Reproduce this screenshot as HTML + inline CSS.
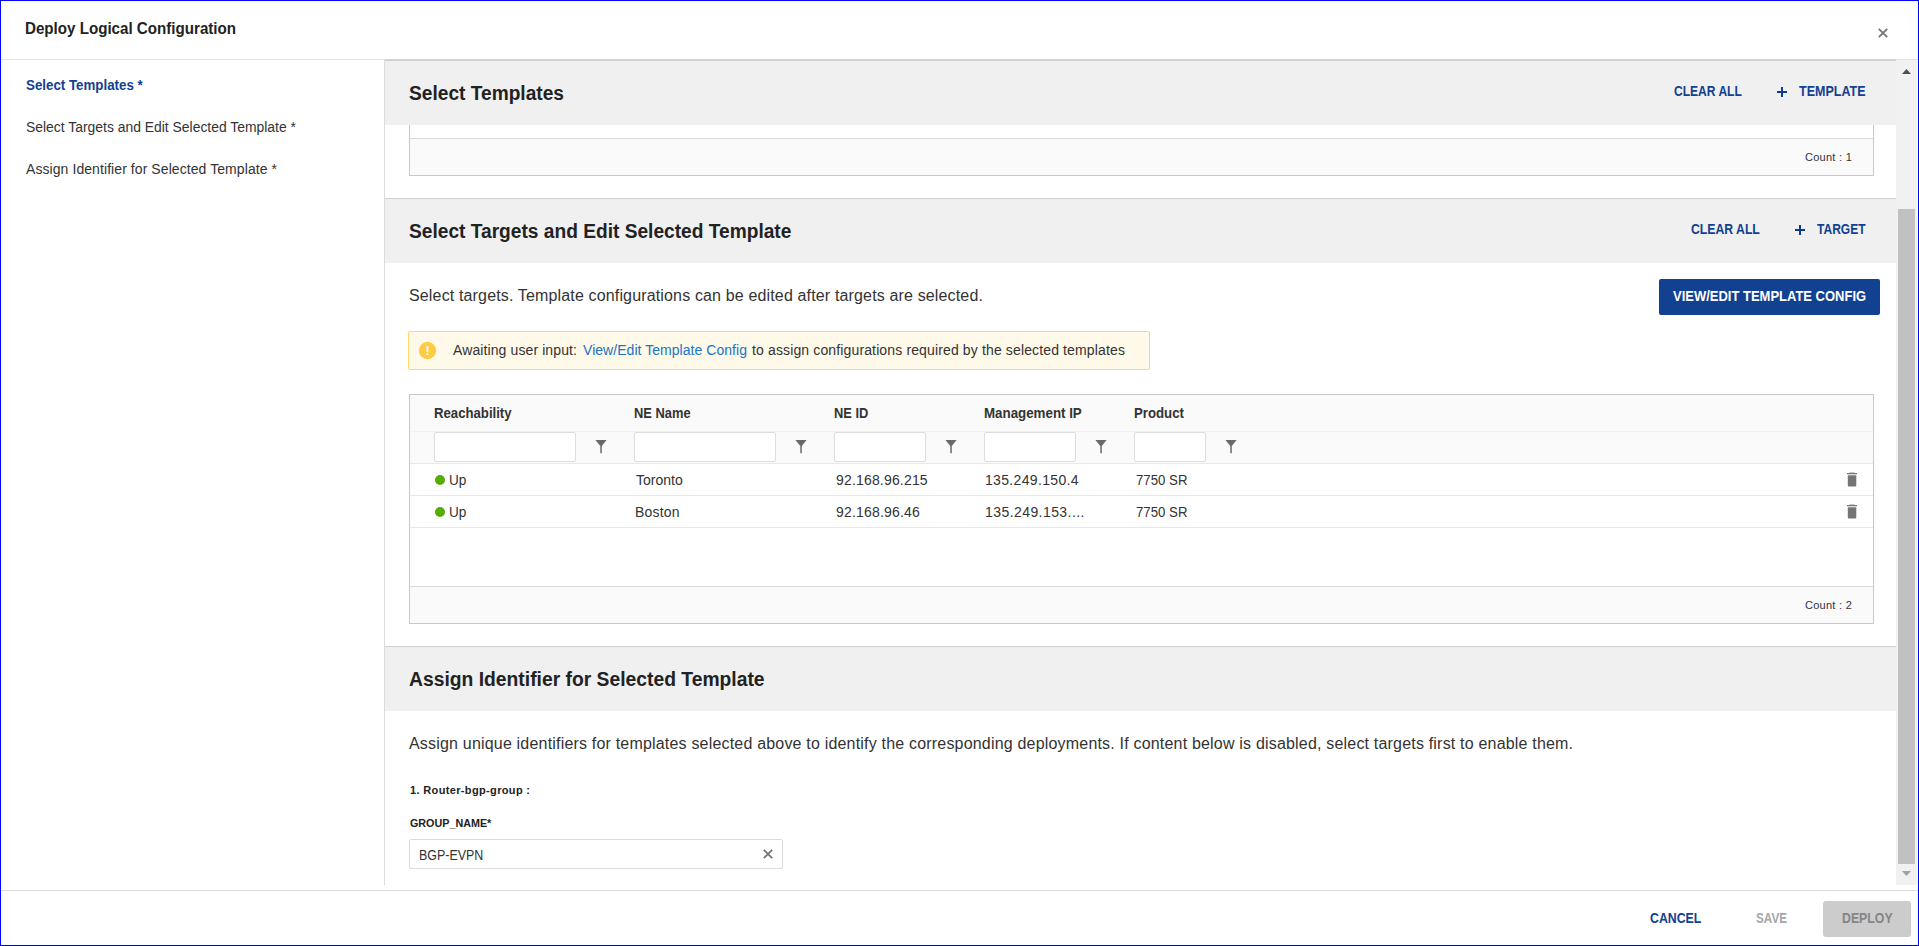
<!DOCTYPE html>
<html><head><meta charset="utf-8"><title>Deploy Logical Configuration</title>
<style>
*{box-sizing:border-box;margin:0;padding:0}
html,body{width:1919px;height:946px;overflow:hidden;background:#fff}
body{font-family:"Liberation Sans",sans-serif;color:#333;position:relative;font-size:14px}
.abs{position:absolute}
#frame{position:absolute;left:0;top:0;width:1919px;height:946px;border:1px solid #0000ff;z-index:50;pointer-events:none}
.t{position:absolute;white-space:nowrap;line-height:1;transform-origin:0 50%}
#hdrline{left:1px;top:59px;width:1917px;height:1px;background:#e2e2e2}
#hdrline2{left:385px;top:59px;width:1511px;height:2px;background:#d2d2d2}
#sideline{left:384px;top:60px;width:1px;height:825px;background:#dcdcdc}
.band{left:385px;width:1511px;height:64px;background:#f0f0f0}
.sep{left:385px;width:1511px;height:1px;background:#d0d0d0}
.tbl{left:409px;width:1465px;border:1px solid #c8c8c8;background:#fff}
.row{position:absolute;left:0;width:1463px}
.fin{position:absolute;height:30px;top:432px;border:1px solid #dedede;border-radius:2px;background:#fff}
.dot{position:absolute;width:10.6px;height:10.6px;border-radius:50%;background:#58ab00}
</style></head><body>
<div id="frame"></div>
<svg class="abs" style="left:1878px;top:28px" width="10" height="10" viewBox="0 0 10 10"><path d="M0.8 0.8L9.2 9.2M9.2 0.8L0.8 9.2" stroke="#757575" stroke-width="1.8" fill="none"/></svg>
<div id="hdrline" class="abs"></div>
<div id="hdrline2" class="abs"></div>
<div id="sideline" class="abs"></div>


<!-- section 1 -->
<div class="abs band" style="top:61px"></div>
<div class="abs" style="left:409px;top:125px;width:1465px;height:51px;border:1px solid #c8c8c8;border-top:none;background:#fff">
  <div class="abs" style="left:0;top:13px;width:1463px;height:37px;background:#fafafa;border-top:1px solid #d8d8d8"></div>
</div>

<svg class="abs" style="left:1777px;top:87px" width="10" height="10" viewBox="0 0 10 10"><path d="M4 0H6V4H10V6H6V10H4V6H0V4H4Z" fill="#0f3b8e"/></svg>
<!-- section 2 -->
<div class="abs sep" style="top:198px"></div>
<div class="abs band" style="top:199px"></div>
<svg class="abs" style="left:1795px;top:225px" width="10" height="10" viewBox="0 0 10 10"><path d="M4 0H6V4H10V6H6V10H4V6H0V4H4Z" fill="#0f3b8e"/></svg>
<div class="abs" style="left:1659px;top:279px;width:221px;height:36px;background:#124191;border-radius:2px"></div>

<div class="abs" style="left:408px;top:331px;width:742px;height:39px;background:#fef9e9;border:1px solid #fdd772;border-radius:2px"></div>
<svg class="abs" style="left:418px;top:341px" width="19" height="19" viewBox="0 0 19 19"><circle cx="9.5" cy="9.5" r="8.65" fill="#fecb45"/><text x="9.5" y="14" text-anchor="middle" font-family="Liberation Sans, sans-serif" font-size="12.5" font-weight="bold" fill="#fffdf5">!</text></svg>

<div class="abs tbl" style="top:394px;height:230px">
  <div class="row" style="top:0;height:37px;background:#fafafa;border-bottom:1px solid #f2f2f2"></div>
  <div class="row" style="top:37px;height:32px;background:#fafafa;border-bottom:1px solid #e9e9e9"></div>
  <div class="row" style="top:69px;height:32px;border-bottom:1px solid #e8e8e8"></div>
  <div class="row" style="top:101px;height:32px;border-bottom:1px solid #e8e8e8"></div>
  <div class="row" style="top:191px;height:37px;background:#fafafa;border-top:1px solid #dadada"></div>
</div>
<div class="fin" style="left:434px;width:142px"></div>
<div class="fin" style="left:634px;width:142px"></div>
<div class="fin" style="left:834px;width:92px"></div>
<div class="fin" style="left:984px;width:92px"></div>
<div class="fin" style="left:1134px;width:72px"></div>
<svg class="abs" style="left:595px;top:440px" width="12" height="14" viewBox="0 0 12 14"><path d="M0.4 0H11.6L6.8 5.9V13.2H5.3V5.9Z" fill="#6a6a6a"/></svg>
<svg class="abs" style="left:795px;top:440px" width="12" height="14" viewBox="0 0 12 14"><path d="M0.4 0H11.6L6.8 5.9V13.2H5.3V5.9Z" fill="#6a6a6a"/></svg>
<svg class="abs" style="left:945px;top:440px" width="12" height="14" viewBox="0 0 12 14"><path d="M0.4 0H11.6L6.8 5.9V13.2H5.3V5.9Z" fill="#6a6a6a"/></svg>
<svg class="abs" style="left:1095px;top:440px" width="12" height="14" viewBox="0 0 12 14"><path d="M0.4 0H11.6L6.8 5.9V13.2H5.3V5.9Z" fill="#6a6a6a"/></svg>
<svg class="abs" style="left:1225px;top:440px" width="12" height="14" viewBox="0 0 12 14"><path d="M0.4 0H11.6L6.8 5.9V13.2H5.3V5.9Z" fill="#6a6a6a"/></svg>

<div class="dot" style="left:434.5px;top:474.7px"></div>
<div class="dot" style="left:434.5px;top:506.7px"></div>
<svg class="abs" style="left:1846px;top:472px" width="13" height="15" viewBox="0 0 13 15"><path d="M3.6 0.3H8.6V1H3.6Z" fill="#757575" opacity=".6"/><path d="M0.9 1H11.1V2.2H0.9ZM1.8 3.2H10.3V13.4Q10.3 14.4 9.3 14.4H2.8Q1.8 14.4 1.8 13.4Z" fill="#757575"/></svg>
<svg class="abs" style="left:1846px;top:504px" width="13" height="15" viewBox="0 0 13 15"><path d="M3.6 0.3H8.6V1H3.6Z" fill="#757575" opacity=".6"/><path d="M0.9 1H11.1V2.2H0.9ZM1.8 3.2H10.3V13.4Q10.3 14.4 9.3 14.4H2.8Q1.8 14.4 1.8 13.4Z" fill="#757575"/></svg>

<!-- section 3 -->
<div class="abs sep" style="top:646px"></div>
<div class="abs band" style="top:647px"></div>
<div class="abs" style="left:409px;top:839px;width:374px;height:30px;border:1px solid #dcdcdc;border-radius:2px;background:#fff"></div>
<svg class="abs" style="left:763px;top:849px" width="10" height="10" viewBox="0 0 10 10"><path d="M0.8 0.8L9.2 9.2M9.2 0.8L0.8 9.2" stroke="#757575" stroke-width="1.8" fill="none"/></svg>

<!-- scrollbar -->
<div class="abs" style="left:1896px;top:60px;width:21px;height:825px;background:#f1f1f1"></div>
<div class="abs" style="left:1898px;top:209px;width:17px;height:655px;background:#c1c1c1"></div>
<svg class="abs" style="left:1902px;top:69px" width="9" height="5" viewBox="0 0 9 5"><path d="M0 5L4.5 0L9 5Z" fill="#505050"/></svg>
<svg class="abs" style="left:1902px;top:871px" width="9" height="5" viewBox="0 0 9 5"><path d="M0 0L4.5 5L9 0Z" fill="#a0a0a0"/></svg>

<!-- footer -->
<div class="abs" style="left:1px;top:890px;width:1917px;height:1px;background:#dcdcdc"></div>
<div class="abs" style="left:1823px;top:901px;width:88px;height:36px;background:#ccc;border-radius:3px"></div>
<div class="t" id="title" style="left:25.00px;top:21px;font-size:16px;color:#222;font-weight:bold;transform:scaleX(0.9459)">Deploy Logical Configuration</div>
<div class="t" id="nav1" style="left:26.00px;top:78px;font-size:14px;color:#124191;font-weight:bold;transform:scaleX(0.9512)">Select Templates *</div>
<div class="t" id="nav2" style="left:26.00px;top:120px;font-size:14px;color:#333;transform:scaleX(0.9930)">Select Targets and Edit Selected Template *</div>
<div class="t" id="nav3" style="left:26.00px;top:162px;font-size:14px;color:#333;letter-spacing:0.075px">Assign Identifier for Selected Template *</div>
<div class="t" id="h1" style="left:409.00px;top:83px;font-size:20px;color:#222;font-weight:bold;transform:scaleX(0.9572)">Select Templates</div>
<div class="t" id="ca1" style="left:1674.00px;top:84px;font-size:14px;color:#124191;font-weight:bold;transform:scaleX(0.8604)">CLEAR ALL</div>
<div class="t" id="tp1" style="left:1799.00px;top:84px;font-size:14px;color:#124191;font-weight:bold;transform:scaleX(0.8935)">TEMPLATE</div>
<div class="t" id="c1" style="left:1805.00px;top:152px;font-size:11px;color:#333;letter-spacing:0.263px">Count : 1</div>
<div class="t" id="h2" style="left:409.00px;top:221px;font-size:20px;color:#222;font-weight:bold;transform:scaleX(0.9574)">Select Targets and Edit Selected Template</div>
<div class="t" id="ca2" style="left:1691.00px;top:222px;font-size:14px;color:#124191;font-weight:bold;transform:scaleX(0.8734)">CLEAR ALL</div>
<div class="t" id="tg2" style="left:1817.00px;top:222px;font-size:14px;color:#124191;font-weight:bold;transform:scaleX(0.8596)">TARGET</div>
<div class="t" id="p1" style="left:409.00px;top:288px;font-size:16px;color:#333;letter-spacing:0.151px">Select targets. Template configurations can be edited after targets are selected.</div>
<div class="t" id="btn" style="left:1673.00px;top:289px;font-size:14px;color:#fff;font-weight:bold;transform:scaleX(0.9277)">VIEW/EDIT TEMPLATE CONFIG</div>
<div class="t" id="al1" style="left:453.00px;top:343px;font-size:14px;color:#333;letter-spacing:0.105px">Awaiting user input:</div>
<div class="t" id="al2" style="left:583.00px;top:343px;font-size:14px;color:#1a73c8;letter-spacing:0.042px">View/Edit Template Config</div>
<div class="t" id="al3" style="left:752.00px;top:343px;font-size:14px;color:#333;letter-spacing:0.136px">to assign configurations required by the selected templates</div>
<div class="t" id="th1" style="left:434.00px;top:406px;font-size:14px;color:#333;font-weight:bold;transform:scaleX(0.9404)">Reachability</div>
<div class="t" id="th2" style="left:634.00px;top:406px;font-size:14px;color:#333;font-weight:bold;transform:scaleX(0.9199)">NE Name</div>
<div class="t" id="th3" style="left:834.00px;top:406px;font-size:14px;color:#333;font-weight:bold;transform:scaleX(0.9189)">NE ID</div>
<div class="t" id="th4" style="left:984.00px;top:406px;font-size:14px;color:#333;font-weight:bold;transform:scaleX(0.9520)">Management IP</div>
<div class="t" id="th5" style="left:1134.00px;top:406px;font-size:14px;color:#333;font-weight:bold;transform:scaleX(0.9434)">Product</div>
<div class="t" id="r1a" style="left:449.00px;top:473px;font-size:14px;color:#333;transform:scaleX(0.9700)">Up</div>
<div class="t" id="r1b" style="left:636.00px;top:473px;font-size:14px;color:#333">Toronto</div>
<div class="t" id="r1c" style="left:836.00px;top:473px;font-size:14px;color:#333;letter-spacing:0.175px">92.168.96.215</div>
<div class="t" id="r1d" style="left:985.00px;top:473px;font-size:14px;color:#333;letter-spacing:0.333px">135.249.150.4</div>
<div class="t" id="r1e" style="left:1136.00px;top:473px;font-size:14px;color:#333;transform:scaleX(0.9444)">7750 SR</div>
<div class="t" id="r2a" style="left:449.00px;top:505px;font-size:14px;color:#333;transform:scaleX(0.9700)">Up</div>
<div class="t" id="r2b" style="left:635.00px;top:505px;font-size:14px;color:#333;letter-spacing:0.180px">Boston</div>
<div class="t" id="r2c" style="left:836.00px;top:505px;font-size:14px;color:#333;letter-spacing:0.191px">92.168.96.46</div>
<div class="t" id="r2d" style="left:985.00px;top:505px;font-size:14px;color:#333;letter-spacing:0.429px">135.249.153....</div>
<div class="t" id="r2e" style="left:1136.00px;top:505px;font-size:14px;color:#333;transform:scaleX(0.9444)">7750 SR</div>
<div class="t" id="c2" style="left:1805.00px;top:600px;font-size:11px;color:#333;letter-spacing:0.263px">Count : 2</div>
<div class="t" id="h3" style="left:409.00px;top:669px;font-size:20px;color:#222;font-weight:bold;transform:scaleX(0.9647)">Assign Identifier for Selected Template</div>
<div class="t" id="p2" style="left:409.00px;top:736px;font-size:16px;color:#333;letter-spacing:0.190px">Assign unique identifiers for templates selected above to identify the corresponding deployments. If content below is disabled, select targets first to enable them.</div>
<div class="t" id="l1" style="left:410.00px;top:785px;font-size:11px;color:#222;font-weight:bold;letter-spacing:0.350px">1. Router-bgp-group :</div>
<div class="t" id="l2" style="left:410.00px;top:818px;font-size:11px;color:#222;font-weight:bold;transform:scaleX(0.9772)">GROUP_NAME*</div>
<div class="t" id="inp" style="left:419.00px;top:848px;font-size:14px;color:#333;transform:scaleX(0.8877)">BGP-EVPN</div>
<div class="t" id="cancel" style="left:1650.00px;top:911px;font-size:14px;color:#124191;font-weight:bold;transform:scaleX(0.8793)">CANCEL</div>
<div class="t" id="save" style="left:1756.00px;top:911px;font-size:14px;color:#a6a6a6;font-weight:bold;transform:scaleX(0.8378)">SAVE</div>
<div class="t" id="deploy" style="left:1842.00px;top:911px;font-size:14px;color:#858585;font-weight:bold;transform:scaleX(0.8793)">DEPLOY</div>
</body></html>
